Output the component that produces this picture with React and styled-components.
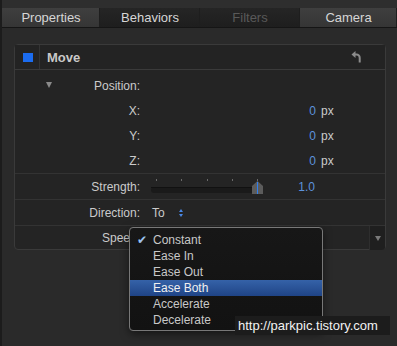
import React from "react";
import styled, { createGlobalStyle } from "styled-components";

const Global = createGlobalStyle`
  html, body {
    margin: 0;
    padding: 0;
    background: #2b2b2b;
  }
  body {
    font-family: "Liberation Sans", Arial, sans-serif;
  }
`;

const Screen = styled.div`
  position: relative;
  width: 397px;
  height: 346px;
  overflow: hidden;
  background: #2a2a2a;
  border-left: 2px solid #1c1c1c;
  box-sizing: border-box;
`;

const TopStrip = styled.div`
  height: 8px;
  background: #2e2e2e;
`;

const TabBar = styled.div`
  display: flex;
  height: 19px;
  border-bottom: 1px solid #151515;
`;

const Tab = styled.div`
  width: ${(p) => p.$w}px;
  display: flex;
  align-items: center;
  justify-content: center;
  font-size: 13px;
  color: ${(p) => (p.$disabled ? "#595959" : "#d6d6d6")};
  background: ${(p) =>
    p.$dark
      ? "linear-gradient(#252525, #1e1e1e)"
      : "linear-gradient(#3f3f3f, #353535)"};
  box-shadow: inset -1px 0 0 #1e1e1e;
`;

const Content = styled.div`
  padding: 16px 11px 0 12px;
`;

const Card = styled.div`
  border: 1px solid #3a3a3a;
  border-radius: 4px;
  background: #242424;
  height: 206px;
  box-sizing: border-box;
`;

const Header = styled.div`
  display: flex;
  height: 24px;
  border-bottom: 1px solid #3a3a3a;
  background: #232323;
`;

const Enable = styled.div`
  width: 24px;
  display: flex;
  align-items: center;
  justify-content: center;
  border-right: 1px solid #343434;
`;

const BlueBox = styled.div`
  width: 10px;
  height: 9px;
  background: #1b6cf0;
  margin-left: 1px;
`;

const Title = styled.div`
  flex: 1;
  display: flex;
  align-items: center;
  padding-left: 7px;
  font-size: 13px;
  font-weight: bold;
  color: #c9c9c9;
`;

const Reset = styled.div`
  width: 34px;
  display: flex;
  align-items: center;
`;

const Group = styled.div`
  padding-top: 3px;
  border-bottom: 1px solid #333;
`;

const Row = styled.div`
  display: flex;
  align-items: center;
  height: ${(p) => p.$h || 25}px;
  border-bottom: ${(p) => (p.$line ? "1px solid #333" : "none")};
  box-sizing: border-box;
`;

const Label = styled.div`
  position: relative;
  width: 125px;
  text-align: right;
  font-size: 12px;
  color: #cbcbcb;
  flex-shrink: 0;
`;

const Disclosure = styled.span`
  position: absolute;
  left: 31px;
  top: 3px;
  width: 0;
  height: 0;
  border-left: 3.5px solid transparent;
  border-right: 3.5px solid transparent;
  border-top: 6px solid #8a8a8a;
`;

const Value = styled.div`
  margin-left: 12px;
  width: 164px;
  display: flex;
  align-items: center;
  justify-content: ${(p) => (p.$start ? "flex-start" : "flex-end")};
  font-size: 12px;
  color: #cbcbcb;
`;

const Num = styled.span`
  color: #5d93dc;
`;

const Unit = styled.span`
  margin-left: 5px;
  font-size: 12px;
  color: #cbcbcb;
`;

const SliderBox = styled.div`
  display: flex;
  align-items: center;
  width: 164px;
  margin-left: 11px;
`;

const SliderValue = styled.span`
  margin-left: auto;
  font-size: 12px;
  color: #5d93dc;
`;

const Stepper = styled.span`
  display: inline-flex;
  flex-direction: column;
  gap: 2px;
  margin-left: 14px;
`;

const Arrow = styled.span`
  width: 0;
  height: 0;
  border-left: 2.5px solid transparent;
  border-right: 2.5px solid transparent;
  ${(p) =>
    p.$up ? "border-bottom: 3px solid #4a88e6;" : "border-top: 3px solid #4a88e6;"}
`;

const PopButton = styled.div`
  margin-left: auto;
  width: 15px;
  height: 100%;
  display: flex;
  align-items: center;
  justify-content: center;
  background: #1f1f1f;
  border-left: 1px solid #2e2e2e;
  border-bottom-right-radius: 3px;
`;

const DownTri = styled.span`
  width: 0;
  height: 0;
  border-left: 3.5px solid transparent;
  border-right: 3.5px solid transparent;
  border-top: 5px solid #7a7a7a;
`;

const Menu = styled.div`
  position: absolute;
  left: 127px;
  top: 227px;
  width: 194px;
  height: 104px;
  box-sizing: border-box;
  padding-top: 4px;
  background: linear-gradient(#171717, #121212);
  border: 1px solid #787878;
  border-radius: 4px;
  box-shadow: 0 3px 8px rgba(0, 0, 0, 0.5);
`;

const Item = styled.div`
  position: relative;
  height: 16px;
  line-height: 16px;
  padding-left: 23px;
  font-size: 12px;
  color: ${(p) => (p.$active ? "#f0f0f0" : "#c8c8c8")};
  background: ${(p) =>
    p.$active ? "linear-gradient(#3562a8, #1f4486)" : "transparent"};
`;

const Check = styled.span`
  position: absolute;
  left: 7px;
  top: 0;
  font-family: "DejaVu Sans", sans-serif;
  font-size: 12px;
  color: #9cc2ee;
`;

const Watermark = styled.div`
  position: absolute;
  left: 233px;
  top: 316px;
  height: 19px;
  padding: 0 12px 0 3px;
  display: flex;
  align-items: center;
  background: #1c1c1c;
  color: #f2f2f2;
  font-size: 13px;
`;

function UndoIcon() {
  return (
    <svg width="11" height="12" viewBox="0 0 11 12">
      <path d="M4.5 0 L0.5 3.5 L4.5 7 Z" fill="#8c8c8c" />
      <path
        d="M3.5 3.5 H5.5 A3.2 3.2 0 0 1 8.7 6.7 V11.5"
        fill="none"
        stroke="#8c8c8c"
        strokeWidth="2"
      />
    </svg>
  );
}

function Slider() {
  const ticks = [5, 30, 56, 81, 106];
  return (
    <svg width="116" height="18" viewBox="0 0 116 18">
      {ticks.map((x) => (
        <rect key={x} x={x} y="1" width="1" height="2" fill="#6a6a6a" />
      ))}
      <rect x="0" y="9" width="108" height="6" rx="3" fill="#1a1a1a" />
      <rect x="0" y="9" width="108" height="1" fill="#111" />
      <path d="M101 8 L106.5 3 L112 8 V16 H101 Z" fill="#5c5c5c" />
      <rect x="106" y="4" width="1" height="12" fill="#2f7ff0" />
    </svg>
  );
}

const speeds = ["Constant", "Ease In", "Ease Out", "Ease Both", "Accelerate", "Decelerate"];

export default function App() {
  return (
    <>
      <Global />
      <Screen>
        <TopStrip />
        <TabBar>
          <Tab $w={98}>Properties</Tab>
          <Tab $w={100} $dark>Behaviors</Tab>
          <Tab $w={100} $dark $disabled>Filters</Tab>
          <Tab $w={97}>Camera</Tab>
        </TabBar>
        <Content>
          <Card>
            <Header>
              <Enable>
                <BlueBox />
              </Enable>
              <Title>Move</Title>
              <Reset>
                <UndoIcon />
              </Reset>
            </Header>
            <Group>
              <Row>
                <Label>
                  <Disclosure />
                  Position:
                </Label>
              </Row>
              {["X:", "Y:", "Z:"].map((l) => (
                <Row key={l}>
                  <Label>{l}</Label>
                  <Value>
                    <Num>0</Num>
                  </Value>
                  <Unit>px</Unit>
                </Row>
              ))}
            </Group>
            <Row $h={26} $line>
              <Label>Strength:</Label>
              <SliderBox>
                <Slider />
                <SliderValue>1.0</SliderValue>
              </SliderBox>
            </Row>
            <Row $h={26} $line>
              <Label>Direction:</Label>
              <Value $start>
                To
                <Stepper>
                  <Arrow $up />
                  <Arrow />
                </Stepper>
              </Value>
            </Row>
            <Row $h={24}>
              <Label>Speed:</Label>
              <PopButton>
                <DownTri />
              </PopButton>
            </Row>
          </Card>
        </Content>
        <Menu>
          {speeds.map((s) => (
            <Item key={s} $active={s === "Ease Both"}>
              {s === "Constant" && <Check>✔</Check>}
              {s}
            </Item>
          ))}
        </Menu>
        <Watermark>http://parkpic.tistory.com</Watermark>
      </Screen>
    </>
  );
}
